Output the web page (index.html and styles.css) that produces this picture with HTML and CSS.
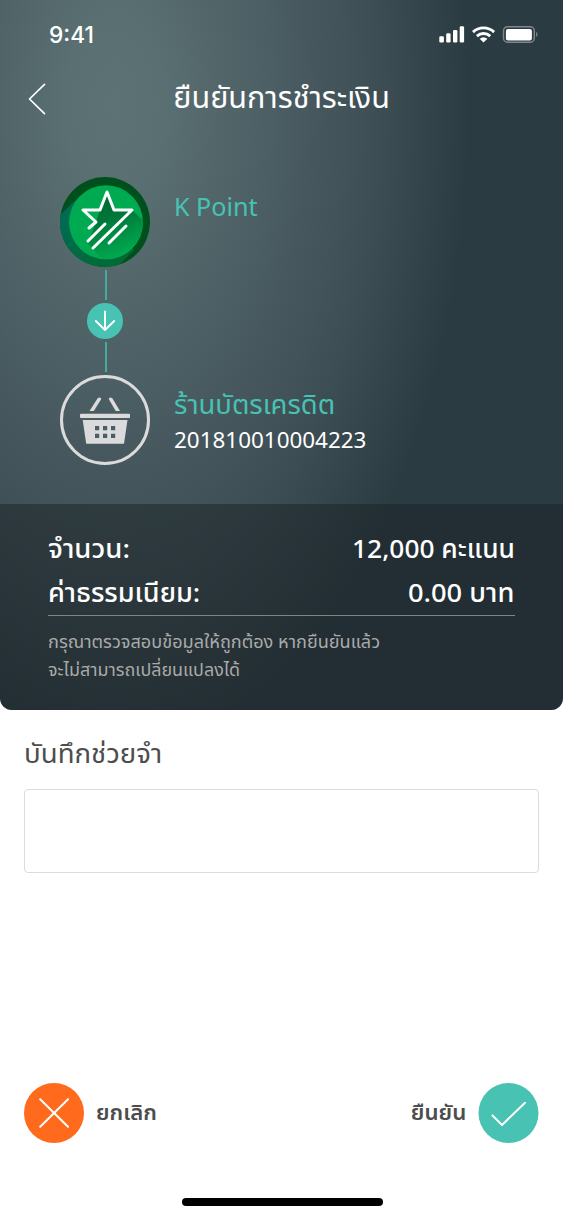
FILE: index.html
```
<!DOCTYPE html>
<html lang="th">
<head>
<meta charset="utf-8">
<title>ยืนยันการชำระเงิน</title>
<link rel="stylesheet" href="styles.css">
</head>
<body>
<main class="screen">
  <section class="card">
    <div class="statusbar">
      <span class="clock">9:41</span>
      <svg class="indicators" width="102" height="20" viewBox="0 0 102 20">
        <g fill="#fff">
          <rect x="1.3" y="11.3" width="4.6" height="6.2" rx="1.3"/>
          <rect x="8.2" y="8.3" width="4.4" height="9.2" rx="1.3"/>
          <rect x="15" y="5" width="4.4" height="12.5" rx="1.3"/>
          <rect x="21.7" y="1.3" width="4.4" height="16.2" rx="1.3"/>
        </g>
        <g fill="none" stroke="#fff" stroke-width="2.8">
          <path d="M35 7.1A15.5 15.5 0 0 1 56.100 7.1"/>
          <path d="M38.900 11.1A9.8 9.8 0 0 1 52.200 11.1"/>
        </g>
        <path fill="#fff" d="M45.500 17.4L41.700 13.8Q45.500 10.7 49.400 13.8Z"/>
        <rect x="65.500" y="1.700" width="30.800" height="15.600" rx="4" fill="none" stroke="#fff" stroke-opacity=".4" stroke-width="1.4"/>
        <rect x="67.900" y="4" width="26" height="11.500" rx="2" fill="#fff"/>
        <path d="M98.200 6.8Q100.800 9.4 98.200 12.2Z" fill="#fff" fill-opacity=".45"/>
      </svg>
    </div>
    <header class="titlebar">
      <svg class="back" width="18" height="32" viewBox="0 0 18 32"><path d="M16.500 1.3L1.500 16L16.500 30.7" fill="none" stroke="#fff" stroke-width="1.7" stroke-linecap="round" stroke-linejoin="round"/></svg>
      <h1 class="title"><span class="t-title">ยืนยันการชำระเงิน</span></h1>
    </header>
    <div class="transfer">
      <div class="rail">
        <svg width="90" height="90" viewBox="0 0 90 90">
          <defs>
            <clipPath id="outer"><circle cx="45" cy="45" r="45"/></clipPath>
            <clipPath id="inner"><circle cx="46" cy="45.300" r="37"/></clipPath>
            <linearGradient id="shade" x1="42" y1="20" x2="66" y2="76" gradientUnits="userSpaceOnUse"><stop offset="0" stop-color="#006b32"/><stop offset=".35" stop-color="#00753a"/><stop offset="1" stop-color="#00a94f"/></linearGradient>
            <linearGradient id="rim" x1="0" y1="30" x2="55" y2="90" gradientUnits="userSpaceOnUse"><stop stop-color="#006b57"/><stop offset="1" stop-color="#006b35"/></linearGradient>
          </defs>
          <circle cx="45" cy="45" r="45" fill="#00501d"/>
          <path clip-path="url(#outer)" d="M0 38L20 19L74 73L55 92H0Z" fill="url(#rim)"/>
          <circle cx="46" cy="45.300" r="37" fill="#00aa50"/>
          <path clip-path="url(#inner)" d="M47 16L54 33L72 33L90 50V90H50L28 67L36 45L40 33Z" fill="url(#shade)"/>
          <path d="M29 51L36 45L23 33H40L47 15L54 33H72L33 71M45 47L28 64M66 49L49 66" fill="none" stroke="#fff" stroke-width="3" stroke-linecap="round" stroke-linejoin="round"/>
        </svg>
        <i class="link"></i>
        <svg width="36" height="36" viewBox="0 0 36 36"><circle cx="18" cy="18" r="18" fill="#47c2b3"/><path d="M18 8.500V27M8.800 18L18 27L27.200 18" fill="none" stroke="#fff" stroke-width="1.900" stroke-linecap="round" stroke-linejoin="round"/></svg>
        <i class="link"></i>
        <svg width="90" height="90" viewBox="0 0 90 90">
          <circle cx="45" cy="45" r="43.500" fill="none" stroke="#dbdbdb" stroke-width="3"/>
          <path d="M37.500 23.500Q40 21.500 41.300 24L33.800 36H29.500ZM52.500 23.500Q50 21.500 48.700 24L55.700 36H60Z" fill="#dbdbdb"/>
          <rect x="20" y="38.700" width="50" height="4.400" rx="1" fill="#dbdbdb"/>
          <path d="M22.700 45H67.500L64 68.800H26.200Z" fill="#dbdbdb"/>
          <path d="M35 51h4.200v4.200H35zM43 51h4.200v4.200H43zM51 51h4.200v4.200H51zM35 58.800h4.200V63H35zM43 58.800h4.200V63H43zM51 58.800h4.200V63H51z" fill="#4a5e63"/>
        </svg>
      </div>
      <div class="parties">
        <div class="party-name"><span class="t-kpoint">K Point</span></div>
        <div class="receiver">
          <div class="party-name"><span class="t-shop">ร้านบัตรเครดิต</span></div>
          <div class="account"><span class="t-account">201810010004223</span></div>
        </div>
      </div>
    </div>
    <div class="summary">
      <div class="row"><span class="t-amount">จำนวน:</span><span class="t-points">12,000 คะแนน</span></div>
      <div class="row"><span class="t-fee">ค่าธรรมเนียม:</span><span class="t-baht">0.00 บาท</span></div>
      <div class="note">
        <div><span class="t-note1">กรุณาตรวจสอบข้อมูลให้ถูกต้อง หากยืนยันแล้ว</span></div>
        <div><span class="t-note2">จะไม่สามารถเปลี่ยนแปลงได้</span></div>
      </div>
    </div>
  </section>
  <section class="memo">
    <label class="memo-label" for="memo"><span class="t-memo">บันทึกช่วยจำ</span></label>
    <input class="memo-input" id="memo" type="text">
  </section>
  <footer class="actions">
    <div class="action">
      <svg width="60" height="60" viewBox="0 0 60 60"><circle cx="30" cy="30" r="30" fill="#ff6a1c"/><path d="M16.200 16.200L44 43.800M44 16.200L16.200 43.800" stroke="#fff" stroke-width="2" stroke-linecap="round"/></svg>
      <span class="t-cancel">ยกเลิก</span>
    </div>
    <div class="action">
      <span class="t-confirm">ยืนยัน</span>
      <svg width="60" height="60" viewBox="0 0 60 60"><circle cx="29.500" cy="30" r="30" fill="#47c2b3"/><path d="M13.500 32.500L23 42L46 19.700" fill="none" stroke="#fff" stroke-width="2" stroke-linecap="round" stroke-linejoin="round"/></svg>
    </div>
  </footer>
  <div class="home"></div>
</main>
</body>
</html>
```
FILE: styles.css
```
* { box-sizing: border-box; }
body { margin: 0; background: #fff; color: #4d4d4d; font-family: "Noto Sans Thai", "Noto Sans", sans-serif; }
svg { display: block; flex: none; overflow: visible; }
span { display: inline-block; white-space: nowrap; transform-origin: 0 50%; }
.screen { width: 563px; height: 1219px; overflow: hidden; display: flex; flex-direction: column; }
.card { width: 562.5px; height: 709.5px; flex: none; display: flex; flex-direction: column; border-radius: 0 0 12px 12px; overflow: hidden; color: #fff; background: radial-gradient(ellipse 355px 640px at 115px 105px, #5d7275 0%, #5a6f72 14%, #4b5e63 45%, #3d4d54 75%, #2b3b42 100%); }
.statusbar { height: 66px; flex: none; display: flex; justify-content: space-between; padding: 25px 23px 0 49px; }
.clock { font: 500 22.5px/19px Inter, sans-serif; transform: scaleX(1.01); }
.titlebar { height: 66px; flex: none; display: grid; grid-template-columns: 19px 1fr 19px; padding: 0 28px; }
.back { margin-top: 17px; }
.title { margin: 0; font-size: 29.5px; font-weight: 450; line-height: 66px; text-align: center; }
.t-title { transform-origin: 50% 50%; transform: scaleX(1.035); }
.transfer { height: 372px; flex: none; display: flex; gap: 24px; padding: 45px 0 0 60px; }
.rail { display: flex; flex-direction: column; align-items: center; gap: 3px; }
.link { width: 2px; height: 30px; background: #42aca1; margin-left: 1px; }
.parties { display: flex; flex-direction: column; gap: 158px; padding-top: 11px; }
.party-name { height: 40px; line-height: 40px; font-size: 26px; font-weight: 450; color: #47c2b3; }
.t-kpoint { transform: scaleX(.967); }
.t-shop { font-size: 26.5px; transform: scaleX(1.035); }
.account { height: 30px; line-height: 31px; font-size: 21px; }
.t-account { transform: scaleX(1.068); }
.summary { flex: 1; padding: 24px 48px 0; background: rgba(25, 33, 36, .5); }
.row { height: 43.5px; display: flex; justify-content: space-between; font-size: 26px; font-weight: 500; line-height: 44px; }
.t-amount { transform: scaleX(1.06); }
.t-fee { transform: scaleX(1.04); }
.t-points, .t-baht { transform-origin: 100% 50%; transform: scaleX(1.012); }
.t-baht { transform: scaleX(1.05); }
.note { border-top: 1.5px solid #7e8585; padding-top: 13px; font-size: 18px; line-height: 28px; color: #aaa; font-weight: 400; }
.t-note1 { transform: scaleX(1.007); }
.t-note2 { transform: scaleX(.995); }
.memo { padding: 25px 24px 0; display: flex; flex-direction: column; gap: 14.5px; }
.memo-label { height: 40px; line-height: 40px; font-size: 26.5px; font-weight: 450; }
.t-memo { transform: scaleX(1.043); }
.memo-input { width: 514.5px; height: 84px; border: 1.5px solid #dcdcdc; border-radius: 4px; background: #fff; }
.actions { margin-top: auto; height: 60px; display: flex; justify-content: space-between; padding: 0 24px; font-size: 21px; font-weight: 600; }
.action { display: flex; align-items: center; gap: 12px; }
.t-cancel { transform: scaleX(1.055); }
.t-confirm { transform-origin: 100% 50%; transform: translateX(-1px) scaleX(1.06); }
.home { width: 201px; height: 8px; margin: 55px 0 13px 181.5px; flex: none; border-radius: 4px; background: #000; }
```
